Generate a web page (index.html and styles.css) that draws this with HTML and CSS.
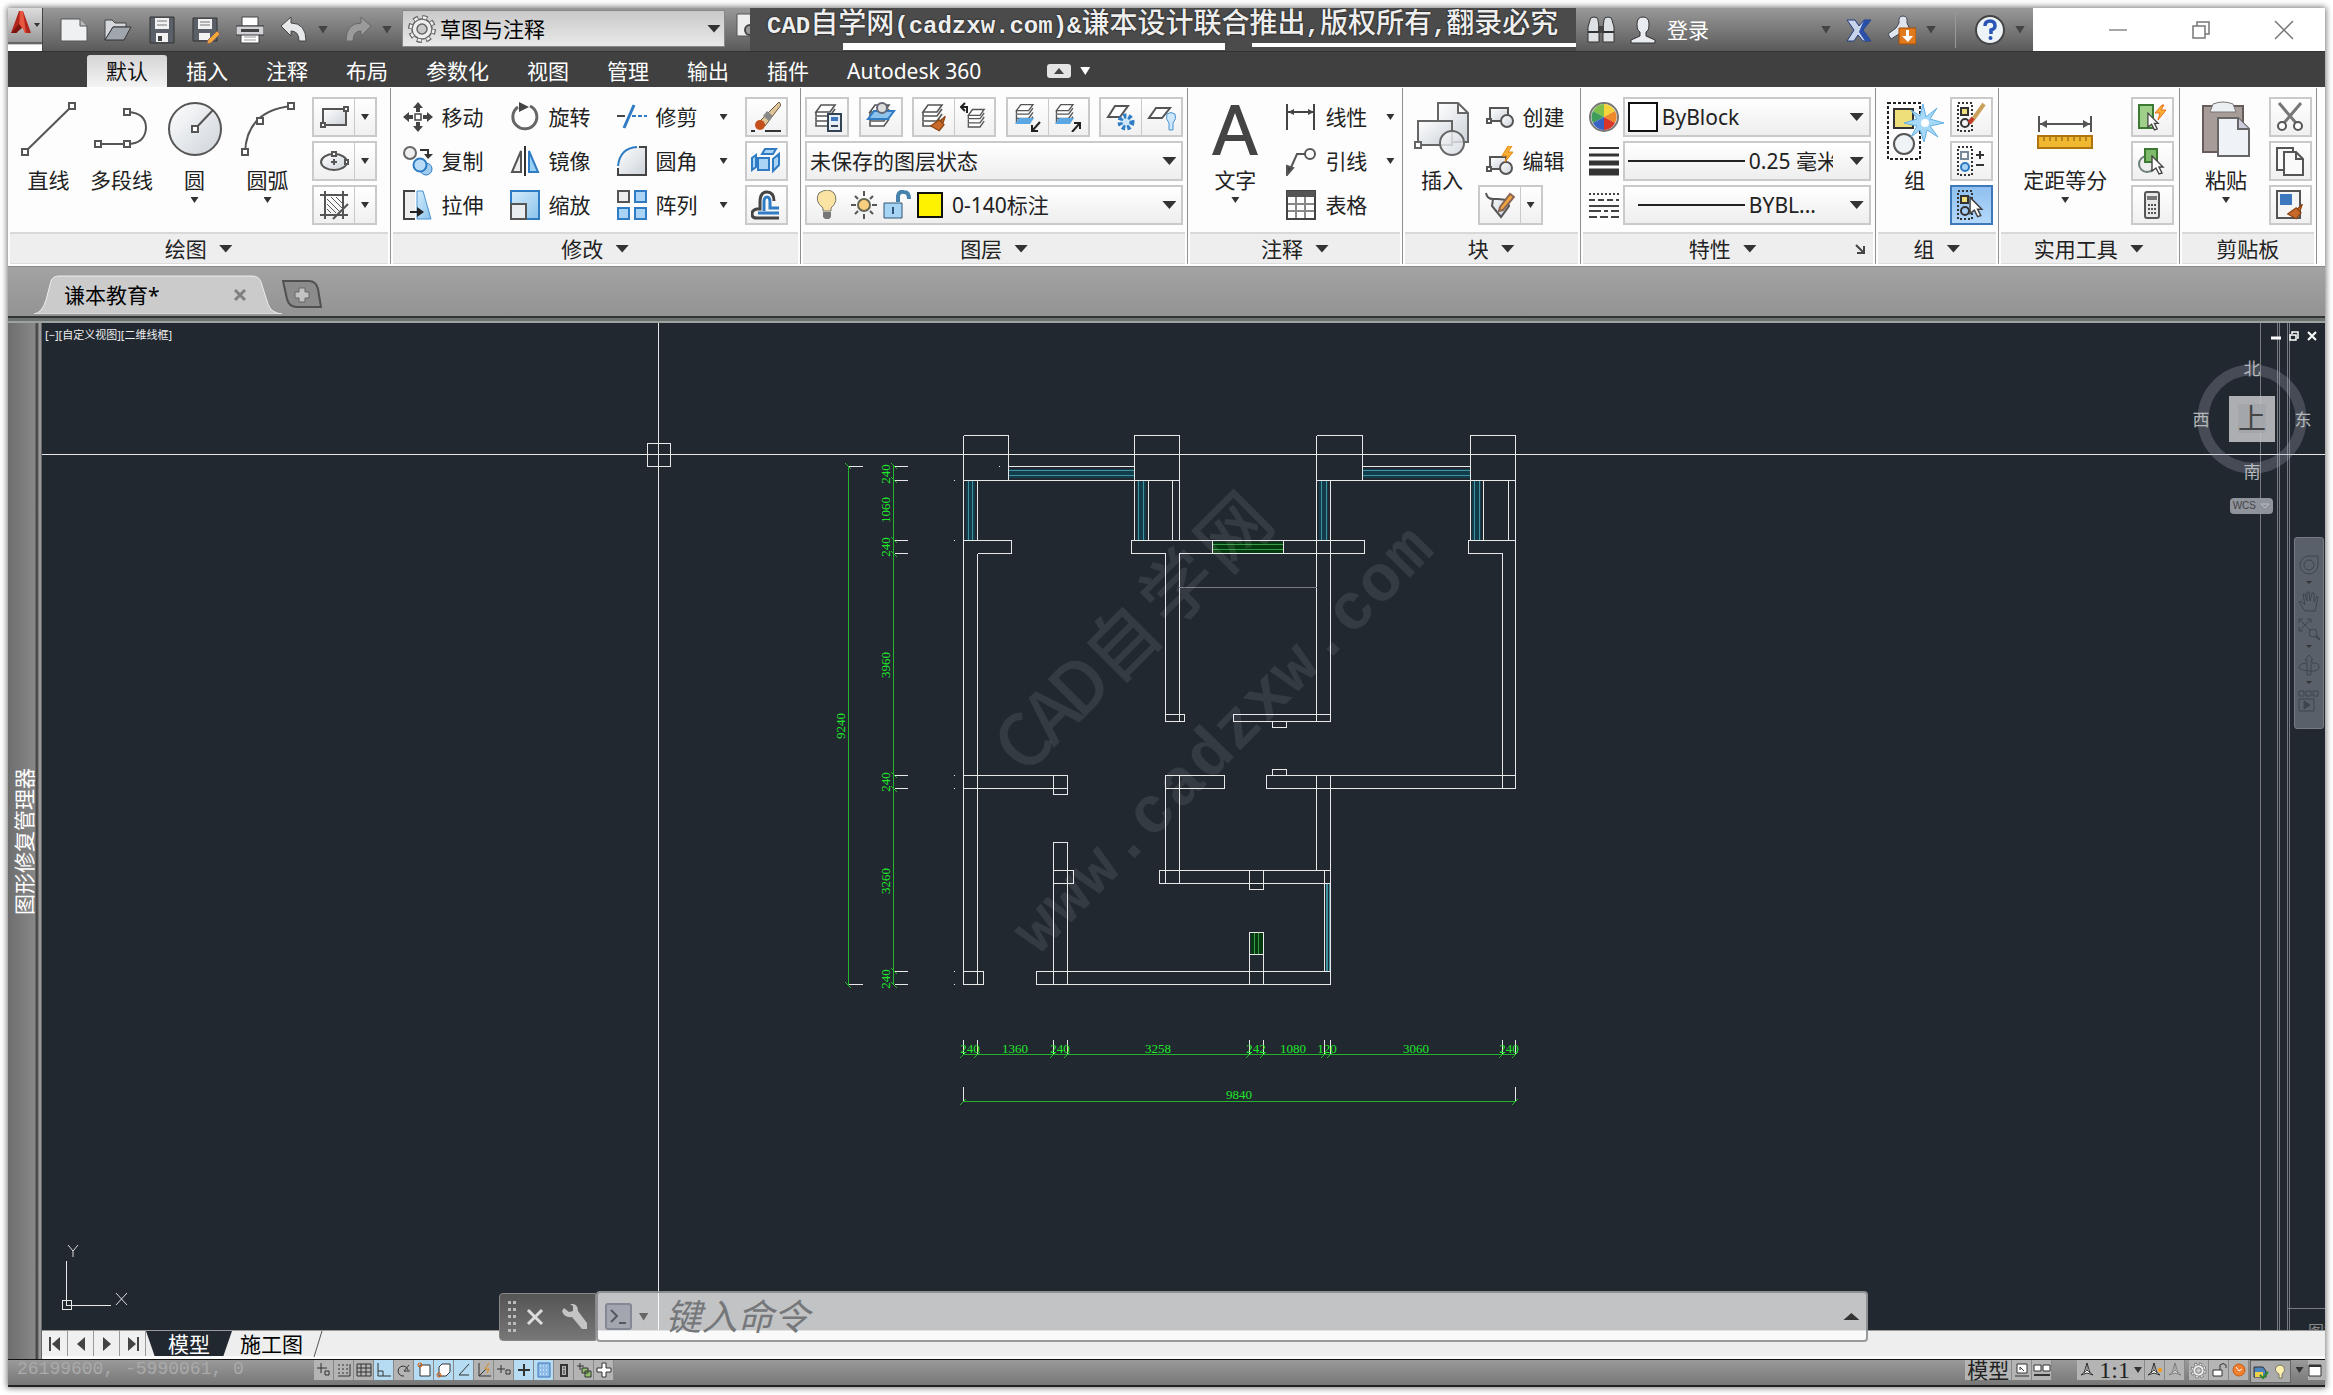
FILE: index.html
```html
<!DOCTYPE html>
<html lang="zh-CN">
<head>
	<meta charset="UTF-8">
	<meta name="viewport" content="width=device-width">
	<title>谦本教育</title>
	<link rel="stylesheet" href="styles.css">
</head>
<body>
	<!-- shared icon parts -->
	<svg class="defs" aria-hidden="true">
		<linearGradient id="gMetal" x1="0" y1="0" x2="1" y2="1"><stop offset="0" stop-color="#fff"/><stop offset="1" stop-color="#cdd3da"/></linearGradient>
		<linearGradient id="gBlue" x1="0" y1="0" x2="1" y2="1"><stop offset="0" stop-color="#d3ecfb"/><stop offset="1" stop-color="#8cc3ec"/></linearGradient>
		<symbol id="layers" viewBox="0 0 30 30">
			<path d="M9 3h14l-5 7H4zM4 10l0 4h14l5-7M4 15v4h14l5-7M4 20v4h14l5-7" fill="#fff" stroke="#555" stroke-width="1.6"/>
		</symbol>
		<symbol id="cursor" viewBox="0 0 14 20">
			<path d="M1 1l11 11H8l3 6-3 1-3-6-4 3z" fill="#fff" stroke="#444" stroke-width="1.4"/>
		</symbol>
		<symbol id="brush" viewBox="0 0 14 14">
			<path d="M13 1L9 5l2 2zM8 4l4 4-4 5-7-4z" fill="#c8692a" stroke="#8a4312"/>
		</symbol>
		<symbol id="gear" viewBox="0 0 30 30">
			<circle cx="15" cy="15" r="11.500" fill="none" stroke="#666" stroke-width="5" stroke-dasharray="5 4.030"/>
			<circle cx="15" cy="15" r="10" fill="#eee" stroke="#666" stroke-width="1.500"/>
			<circle cx="15" cy="15" r="11.500" fill="none" stroke="#eee" stroke-width="2.500" stroke-dasharray="3.500 5.530" stroke-dashoffset="-.7"/>
			<circle cx="15" cy="15" r="5" fill="#c9c9c9" stroke="#666" stroke-width="1.500"/>
		</symbol>
	</svg>

	<div class="app">
		<header class="titlebar">
			<button class="logo" aria-label="应用程序菜单">
				<svg width="34" height="35"><path d="M11 3h4l8 22h-6l-2-5h-5l-1 5H3z" fill="#b3261e"/><path d="M12 3h3l3 22h-1l-2-5h-4z" fill="#e8563d"/><path d="M3 25l8-9 3 4-6 5z" fill="#7d1410"/><path d="M26 15h6l-3 4z" fill="#333"/></svg>
			</button>
			<div class="quick">
				<button aria-label="新建"><svg width="28" height="28"><path d="M1 3h19l7 7v15H1z" fill="#eef0f2" stroke="#555"/><path d="M20 3v7h7" fill="#bbb" stroke="#555"/></svg></button>
				<button aria-label="打开"><svg width="28" height="28"><path d="M1 24V4h7l3 3h11v4H9z" fill="#d5d8dc" stroke="#444"/><path d="M1 24L9 11h18l-7 13z" fill="#9fa6ae" stroke="#333"/></svg></button>
				<button aria-label="保存"><svg width="28" height="28"><path d="M2 1h24v26H2z" fill="#5b6068" stroke="#333"/><path d="M7 2h14v11H7zM8 17h12v9H8z" fill="#f2f2f2"/><path d="M9 5h10M9 9h10" stroke="#777"/><path d="M10 20h4v5h-4z" fill="#444"/></svg></button>
				<button aria-label="另存为"><svg width="28" height="28"><path d="M1 2h24v23H1z" fill="#5b6068" stroke="#333"/><path d="M6 3h14v10H6zM7 17h11v7H7z" fill="#f2f2f2"/><path d="M8 6h10M8 9h10" stroke="#777"/><path d="M16 24l9-9 3 3-9 9-4 1z" fill="#f3a63b" stroke="#865"/></svg></button>
				<button aria-label="打印"><svg width="28" height="28"><path d="M6 1h16v9H6zM5 17h18v10H5z" fill="#fff" stroke="#444"/><path d="M0 10h28v9H0z" fill="#d0d2d5" stroke="#333"/><path d="M5 13h18v3H5z" fill="#444"/><path d="M8 21h12M8 24h12" stroke="#999"/></svg></button>
				<button aria-label="放弃"><svg width="28" height="28"><path d="M1 10L11 1v6q15 0 15 18h-7q0-10-8-10v5z" fill="#e6e8ea" stroke="#444"/></svg><i class="tri dim"></i></button>
				<button aria-label="重做"><svg width="28" height="28"><path d="M27 10L17 1v6Q2 7 2 25h7q0-10 8-10v5z" fill="#9b9b9b" stroke="#666"/></svg><i class="tri dim"></i></button>
			</div>
			<label class="workspace">
				<svg width="30" height="30"><use href="#gear"/></svg>
				<select aria-label="工作空间"><option>草图与注释</option></select>
				<i class="tri large"></i>
			</label>
			<svg class="docfind" width="25" height="36"><path d="M12 6h20v22H12z" fill="#eee" stroke="#555"/><circle cx="25" cy="22" r="5" fill="#999" stroke="#444" stroke-width="2"/></svg>
			<div class="banner">
				<p>CAD<b>自学网</b>(cadzxw.com)&amp;<b>谦本设计联合推出</b>,<b>版权所有</b>,<b>翻录必究</b></p>
				<div class="strips"><i></i><i></i></div>
			</div>
			<div class="account">
				<button aria-label="搜索"><svg width="28" height="28"><path d="M3 4q0-3 4-3t4 3l1 7v15H1V11zM17 4q0-3 4-3t4 3l2 7v15H16V11z" fill="#dfe2e5" stroke="#333"/><path d="M11 10h6v7h-6z" fill="#444"/><path d="M1 16h11M16 16h11" stroke="#333" stroke-width="2"/></svg></button>
				<button class="login"><svg width="28" height="28"><path d="M8 8q0-7 6-7t6 7-3 8v4l9 4v3H2v-3l9-4v-4q-3-1-3-8z" fill="#e9edf1" stroke="#333"/></svg>登录<i class="tri dim"></i></button>
				<button aria-label="Exchange"><svg width="28" height="28"><path d="M2 4h8l4 6 5-6h7l-8 10 8 11h-8l-5-6-4 6H2l7-11z" fill="#c8d4ea" stroke="#223a7a"/><path d="M19 4h7l-8 10 8 11h-6l-6-9z" fill="#2a4fa8"/></svg></button>
				<button aria-label="A360"><svg width="29" height="30"><path d="M12 8q-1-7 4-7t4 7l6 13-8 6-6-8-8 5-3-5 8-6z" fill="#dfe5ee" stroke="#445"/><path d="M12 13h17v16H12z" fill="#e07a1c" stroke="#a34c06"/><path d="M19 15h3v6h4l-5 6-6-6h4z" fill="#fff"/></svg><i class="tri dim"></i></button>
				<i class="sep"></i>
				<button aria-label="帮助"><svg width="30" height="30"><circle cx="15" cy="15" r="14" fill="#eef3f8" stroke="#444" stroke-width="2"/><path d="M10 11q0-5 5-5t5 5q0 3-4 4v4" fill="none" stroke="#2a55b5" stroke-width="3.500"/><circle cx="15.500" cy="23" r="2" fill="#2a55b5"/></svg><i class="tri dim"></i></button>
			</div>
			<div class="winctl">
				<button aria-label="最小化"><svg width="20" height="20"><path d="M1 10h18" stroke="#888" stroke-width="1.500"/></svg></button>
				<button aria-label="还原"><svg width="20" height="20" fill="none" stroke="#777" stroke-width="1.500"><path d="M2 6h12v12H2zM6 6V2h12v12h-4"/></svg></button>
				<button aria-label="关闭"><svg width="20" height="20"><path d="M1 1l18 18M19 1L1 19" stroke="#777" stroke-width="1.500"/></svg></button>
			</div>
		</header>

		<nav class="tabs">
			<button class="active">默认</button>
			<button>插入</button>
			<button>注释</button>
			<button>布局</button>
			<button>参数化</button>
			<button>视图</button>
			<button>管理</button>
			<button>输出</button>
			<button>插件</button>
			<button>Autodesk 360</button>
			<button class="mini" aria-label="最小化功能区"><svg width="24" height="14"><rect width="24" height="14" rx="3" fill="#e4e4e4"/><path d="M7 10h10l-5-6z" fill="#444"/></svg><i class="tri white"></i></button>
		</nav>

		<div class="ribbon">
			<section class="panel draw">
				<div class="body">
					<button class="big"><svg width="56" height="56" fill="#fff" stroke="#555" stroke-width="2"><path d="M4 51L51 5"/><path d="M1 48h6v6H1zM48 2h6v6h-6z"/></svg>直线</button>
					<button class="big"><svg width="56" height="56" fill="none" stroke="#555" stroke-width="2"><path d="M4 43h29q18 0 19-16 0-15-18-16"/><path fill="#fff" d="M1 40h6v6H1zM30 40h6v6h-6zM30 8h6v6h-6z"/></svg>多段线</button>
					<button class="big"><svg width="56" height="56" stroke="#555" stroke-width="2"><circle cx="28" cy="28" r="26" fill="url(#gMetal)"/><path d="M28 28l18-19"/><path fill="#fff" d="M25 25h6v6h-6z"/></svg>圆<i class="tri small"></i></button>
					<button class="big"><svg width="56" height="56" fill="none" stroke="#555" stroke-width="2"><path d="M5 51Q7 10 51 5"/><path fill="#fff" d="M2 48h6v6H2zM17 17h6v6h-6zM48 2h6v6h-6z"/></svg>圆弧<i class="tri small"></i></button>
					<div class="stack">
						<div class="split"><button aria-label="矩形"><svg width="30" height="24" fill="#fff" stroke="#555" stroke-width="2"><path fill="url(#gMetal)" d="M4 4h23v16H4z"/><path d="M2 18h4v4H2zM25 2h4v4h-4z"/></svg></button><button aria-label="更多"><i class="tri small"></i></button></div>
						<div class="split"><button aria-label="椭圆"><svg width="30" height="24" fill="#fff" stroke="#555" stroke-width="2"><ellipse cx="15" cy="13" rx="13" ry="8" fill="url(#gMetal)"/><path d="M13 3h4v4h-4zM26 11h3v4h-3zM15 10v6M12 13h6"/></svg></button><button aria-label="更多"><i class="tri small"></i></button></div>
						<div class="split"><button aria-label="图案填充"><svg width="30" height="30" fill="none" stroke="#555" stroke-width="2"><path d="M6 1v28M24 1v28M1 5h28M1 25h28M29 14L14 29"/><path stroke-width="1" d="M8 9l13 13M8 14l9 9M12 7l11 11M17 7l6 6M8 19l4 4"/></svg></button><button aria-label="更多"><i class="tri small"></i></button></div>
					</div>
				</div>
				<button class="caption">绘图<i class="tri large"></i></button>
			</section>

			<section class="panel modify">
				<div class="body">
					<div class="stack">
						<button class="item"><svg width="30" height="30" fill="#444"><path d="M15 0l5 6h-3v4h-4V6h-3zM15 30l5-6h-3v-4h-4v4h-3zM0 15l6-5v3h4v4H6v3zM30 15l-6-5v3h-4v4h4v3z"/><path d="M12 12h6v6h-6z" fill="#fff" stroke="#444" stroke-width="1.500"/></svg>移动</button>
						<button class="item"><svg width="30" height="30"><circle cx="7" cy="7" r="6" fill="#eee" stroke="#666" stroke-width="2"/><path d="M17 4h8v5" fill="none" stroke="#333" stroke-width="2"/><path d="M21 8h9l-5 5z" fill="#333"/><circle cx="23" cy="23" r="6" fill="#9ecbf0" stroke="#2f7bc4"/><circle cx="17" cy="19" r="6.500" fill="#b8dcf6" stroke="#2f7bc4" stroke-width="2"/></svg>复制</button>
						<button class="item"><svg width="30" height="30"><path d="M12 1H1v28h11" fill="#eee" stroke="#444" stroke-width="2"/><path d="M14 1h6l8 28H14z" fill="url(#gBlue)" stroke="#4b94d4"/><path d="M7 22h12" stroke="#222" stroke-width="2"/><path d="M14 17l7 5-7 5z" fill="#222"/></svg>拉伸</button>
					</div>
					<div class="stack">
						<button class="item"><svg width="30" height="30"><path d="M20 4a12 12 0 1 1-12 1" fill="none" stroke="#666" stroke-width="3"/><path d="M9 0l10 5-10 5z" fill="#444"/></svg>旋转</button>
						<button class="item"><svg width="30" height="30"><path d="M11 5v21H2z" fill="#eee" stroke="#555" stroke-width="2"/><path d="M19 5v21h9z" fill="#9bd0f5" stroke="#2f7bc4" stroke-width="2"/><path d="M15 0v30" stroke="#333" stroke-width="2"/></svg>镜像</button>
						<button class="item"><svg width="30" height="30"><path d="M1 1h28v28H1z" fill="url(#gBlue)" stroke="#2f7bc4" stroke-width="2"/><path d="M1 14h15v15H1z" fill="#e9edf0" stroke="#555" stroke-width="2"/></svg>缩放</button>
					</div>
					<div class="stack wide">
						<button class="item"><svg width="30" height="30" fill="none" stroke-width="2"><path d="M0 14h8" stroke="#444"/><path d="M7 26L17 3" stroke="#2f7bc4" stroke-width="3"/><path d="M15 14h15" stroke="#2f7bc4" stroke-dasharray="4 2"/></svg>修剪<i class="tri small"></i></button>
						<button class="item"><svg width="30" height="30" fill="none" stroke-width="2"><path d="M1 20Q3 2 20 1h9v28H1z" fill="url(#gMetal)" stroke="none"/><path d="M1 20Q3 2 20 1" stroke="#2f7bc4"/><path d="M22 1h7v28H1v-7" stroke="#444"/></svg>圆角<i class="tri small"></i></button>
						<button class="item"><svg width="30" height="30" fill="#a9d4f5" stroke="#2f7bc4" stroke-width="2"><path d="M1 1h11v11H1z" fill="#eee" stroke="#555"/><path d="M18 1h11v11H18zM1 18h11v11H1zM18 18h11v11H18z"/></svg>阵列<i class="tri small"></i></button>
					</div>
					<div class="stack">
						<button class="tool" aria-label="删除"><svg width="30" height="30"><path d="M0 29h4M14 29h16" stroke="#333" stroke-width="2"/><path d="M28 0l2 3-16 21-6-4z" fill="#dfc59a" stroke="#6b5840"/><path d="M16 9l6 5-4 5-6-5z" fill="#888"/><circle cx="9" cy="23" r="5" fill="#c5501c"/></svg></button>
						<button class="tool" aria-label="分解"><svg width="30" height="30" fill="#a9d4f5" stroke="#2f7bc4" stroke-width="2"><path d="M11 8l3-5h11l-3 5zM7 12h11v12H7zM1 12l4-3v12l-4 3zM22 13l6-5v11l-6 6z"/></svg></button>
						<button class="tool" aria-label="偏移"><svg width="30" height="30" fill="none" stroke="#444" stroke-width="3"><path d="M28 28H6q-5 0-5-4t5-5h3v-7q0-10 7-10t7 9"/><path d="M28 23H7M13 21v-9q0-5 3-5t3 5v6h9" stroke="#2f7bc4"/></svg></button>
					</div>
				</div>
				<button class="caption">修改<i class="tri large"></i></button>
			</section>

			<section class="panel layer">
				<div class="body stack">
					<div class="row">
						<div class="split even"><button aria-label="图层特性"><svg width="30" height="30"><use href="#layers"/><path d="M16 12h13v17H16z" fill="#e8eef6" stroke="#345" stroke-width="2"/><path d="M19 15h7v4h-7z" fill="#3b78bd"/><path d="M19 24h7" stroke="#345" stroke-width="2"/></svg></button></div>
						<div class="split even"><button aria-label="图层隔离"><svg width="30" height="30"><use href="#layers"/><path d="M8 9h20l-6 8H2z" fill="#8cc3ec" stroke="#2f7bc4" stroke-width="2"/><circle cx="16" cy="6" r="5" fill="#ddd" stroke="#667" stroke-width="2"/></svg></button></div>
						<div class="split even"><button aria-label="匹配图层"><svg width="30" height="30"><use href="#layers"/><use href="#brush" x="10" y="13" width="18" height="17"/></svg></button><button aria-label="上一个图层"><svg width="30" height="30"><use href="#layers" x="5" y="5" width="25" height="25"/><path d="M1 5h6v6M5 1L1 5l4 4" fill="none" stroke="#222" stroke-width="2"/></svg></button></div>
						<div class="split even"><button aria-label="置为当前"><svg width="30" height="30"><use href="#layers" width="26" height="26"/><path d="M6 16h15l-4 6H2z" fill="#5aa7e4"/><path d="M27 20l-8 9m0-6v6h6" fill="none" stroke="#222" stroke-width="2"/></svg></button><button aria-label="更改图层"><svg width="30" height="30"><use href="#layers" width="26" height="26"/><path d="M6 16h15l-4 6H2z" fill="#5aa7e4"/><path d="M19 30l8-9m-6 0h6v6" fill="none" stroke="#222" stroke-width="2"/></svg></button></div>
						<div class="split even"><button aria-label="冻结图层"><svg width="30" height="30"><path d="M9 4h13l-8 11H2z" fill="#fff" stroke="#555" stroke-width="2"/><circle cx="20" cy="20" r="6" fill="#cfe7fa" stroke="#2f7bc4" stroke-width="5" stroke-dasharray="3 2"/></svg></button><button aria-label="关闭图层"><svg width="30" height="30"><path d="M9 6h14l-8 10H2z" fill="#fff" stroke="#555" stroke-width="2"/><path d="M20 12q4-3 8 0 2 5-2 9v7h-4v-7q-4-4-2-9z" fill="#cfe7fa" stroke="#4b94d4"/></svg></button></div>
					</div>
					<label class="combo"><select aria-label="图层状态"><option>未保存的图层状态</option></select><i class="tri large"></i></label>
					<label class="combo">
						<svg width="104" height="30"><path d="M6 3q9-6 15 0 5 8-3 15v3h-8v-3Q1 11 6 3z" fill="#fbe3a4" stroke="#776"/><path d="M10 22h8v5l-2 2h-4l-2-2z" fill="#777"/><circle cx="51" cy="15" r="6" fill="#f8cf7e" stroke="#665" stroke-width="2"/><path d="M51 1v5M51 24v5M38 15h5M59 15h5M42 6l3 3M57 21l3 3M60 6l-3 3M45 21l-3 3" stroke="#555" stroke-width="2"/><path d="M71 13h18v15H71z" fill="#a5d4f4" stroke="#357"/><path d="M85 12V6q1-5 6-4 5 0 5 7" fill="none" stroke="#4682ac" stroke-width="4"/><path d="M80 17v7" stroke="#357" stroke-width="2"/></svg>
						<i class="swatch yellow"></i>
						<select aria-label="图层"><option>0-140标注</option></select><i class="tri large"></i>
					</label>
				</div>
				<button class="caption">图层<i class="tri large"></i></button>
			</section>

			<section class="panel note">
				<div class="body">
					<button class="big"><svg width="56" height="56"><path d="M5 54L24 4h8l19 50h-8l-5-14H18l-5 14zM20 34h16l-8-22z" fill="#444" fill-rule="evenodd"/></svg>文字<i class="tri small"></i></button>
					<div class="stack">
						<button class="item"><svg width="30" height="30" stroke="#444" stroke-width="2"><path d="M1 2v26M28 2v26M2 10h26"/><path d="M2 10l6-3v6zM28 10l-6-3v6z" fill="#444" stroke="none"/></svg>线性<i class="tri small"></i></button>
						<button class="item"><svg width="30" height="30" fill="none" stroke="#555" stroke-width="2"><circle cx="24" cy="8" r="5"/><path d="M19 8h-8L3 26"/><path d="M1 20l6 2-6 7z" fill="#444"/></svg>引线<i class="tri small"></i></button>
						<button class="item"><svg width="30" height="30"><path d="M1 1h28v28H1z" fill="#fff" stroke="#444" stroke-width="2"/><path d="M1 1h28v6H1z" fill="#555"/><path d="M2 14h26M2 21h26M10 7v21M19 7v21" stroke="#888" stroke-width="2"/></svg>表格</button>
					</div>
				</div>
				<button class="caption">注释<i class="tri large"></i></button>
			</section>

			<section class="panel block">
				<div class="body">
					<button class="big"><svg width="56" height="56" fill="url(#gMetal)" stroke="#666" stroke-width="2"><path d="M24 2h20l10 10v29H24zM44 2v10h10"/><path d="M4 20h34v24H4z"/><path d="M1 41h6v6H1z" fill="#fff"/><circle cx="38" cy="42" r="12" fill-opacity=".8"/></svg>插入</button>
					<div class="stack">
						<button class="item"><svg width="28" height="30" fill="url(#gMetal)" stroke="#555" stroke-width="2"><path d="M4 6h18v13H4z"/><path d="M1 17h4v4H1z" fill="#fff"/><circle cx="21" cy="19" r="6"/></svg>创建</button>
						<button class="item"><svg width="28" height="30" fill="url(#gMetal)" stroke="#555" stroke-width="2"><path d="M4 11h16v12H4z"/><path d="M1 21h4v4H1z" fill="#fff"/><circle cx="20" cy="22" r="6"/><path d="M22 0l-6 10h5l-2 6 8-10h-5l4-6z" fill="#f7b031" stroke="#e0871a" stroke-width="1"/></svg>编辑</button>
						<div class="split"><button aria-label="编辑属性"><svg width="30" height="30" fill="none" stroke="#555" stroke-width="2"><path d="M1 3q1 6 7 6h5l9 1 2 6-8 11-9-11 1-7" fill="url(#gMetal)"/><path d="M15 17L25 4l4 3-11 13-4 1z" fill="#f3a63b" stroke="#865"/></svg></button><button aria-label="更多"><i class="tri small"></i></button></div>
					</div>
				</div>
				<button class="caption">块<i class="tri large"></i></button>
			</section>

			<section class="panel props">
				<div class="body stack">
					<div class="prop"><svg width="30" height="30"><circle cx="15" cy="15" r="14" fill="#eee" stroke="#777" stroke-width="2"/><path d="M15 15V2A13 13 0 0 1 26 9z" fill="#f5d33b"/><path d="M15 15V2A13 13 0 0 0 4 9z" fill="#7fc04c"/><path d="M15 15L26 9a13 13 0 0 1 0 12z" fill="#ee8a2b"/><path d="M15 15L4 9a13 13 0 0 0 0 12z" fill="#3f9c59"/><path d="M15 15l11 6a13 13 0 0 1-11 7z" fill="#d9362b"/><path d="M15 15L4 21a13 13 0 0 0 11 7z" fill="#3762c4"/></svg>
						<label class="combo"><i class="swatch"></i><select aria-label="对象颜色"><option>ByBlock</option></select><i class="tri large"></i></label></div>
					<div class="prop"><svg width="30" height="30" stroke="#333"><path d="M0 2h30" stroke-width="2"/><path d="M0 9h30" stroke-width="3"/><path d="M0 17h30" stroke-width="5"/><path d="M0 26h30" stroke-width="7"/></svg>
						<label class="combo"><i class="line"></i><select class="cut" aria-label="线宽"><option>0.25 毫米</option></select><i class="tri large"></i></label></div>
					<div class="prop"><svg width="30" height="30" stroke="#444" stroke-width="2"><path d="M0 4h30" stroke-dasharray="2 2"/><path d="M0 10h30" stroke-dasharray="6 3"/><path d="M0 16h30"/><path d="M0 21h30" stroke-dasharray="12 3 4 3"/><path d="M0 27h30" stroke-dasharray="8 3"/></svg>
						<label class="combo"><i class="line short"></i><select class="cut" aria-label="线型"><option>BYBL...</option></select><i class="tri large"></i></label></div>
				</div>
				<div class="caption"><span></span><button>特性<i class="tri large"></i></button><button class="launch" aria-label="特性选项板"><svg width="10" height="10"><path d="M1 1l7 7M9 2v7H2" fill="none" stroke="#444" stroke-width="2"/></svg></button></div>
			</section>

			<section class="panel group">
				<div class="body">
					<button class="big"><svg width="60" height="60"><path d="M3 2h32v56H3z" fill="none" stroke="#222" stroke-width="2" stroke-dasharray="3 2"/><path d="M9 8h19v19H9z" fill="#efdf7a" stroke="#333" stroke-width="2"/><circle cx="19" cy="43" r="10" fill="#eef3f7" stroke="#555" stroke-width="2"/><path d="M38 3l3 13 11-9-7 11 14 4-14 3 8 11-11-7-3 12-4-12-9 7 6-11-13-3 13-4-6-9 9 6z" fill="#a6d9f8" stroke="#63b0e4"/><circle cx="40" cy="22" r="4" fill="#fff"/></svg>组</button>
					<div class="stack">
						<button class="tool" aria-label="解除编组"><svg width="30" height="30" fill="none" stroke="#333" stroke-width="2"><path d="M2 1h14v28H2z" stroke-dasharray="2 2"/><path d="M5 6h7v7H5z" fill="#efdf7a"/><circle cx="9" cy="21" r="4"/><path d="M28 2L18 16l-4 5" stroke="#caa05a" stroke-width="4"/><path d="M17 16l-4 5" stroke="#c0392b" stroke-width="4"/></svg></button>
						<button class="tool" aria-label="组编辑"><svg width="30" height="30" fill="none" stroke="#333" stroke-width="2"><path d="M2 1h14v28H2z" stroke-dasharray="2 2"/><path d="M5 6h7v7H5z" stroke="#789"/><circle cx="9" cy="21" r="4" fill="#a9d4f5" stroke="#2f7bc4"/><path d="M20 9h8M24 5v8M20 19h8"/></svg></button>
						<button class="tool on" aria-label="启用组选择"><svg width="30" height="30" fill="none" stroke="#333" stroke-width="2"><path d="M2 1h14v28H2z" stroke-dasharray="2 2"/><path d="M5 6h7v7H5z" fill="#efdf7a"/><circle cx="9" cy="21" r="4"/><use href="#cursor" x="13" y="6" width="15" height="22"/></svg></button>
					</div>
				</div>
				<button class="caption">组<i class="tri large"></i></button>
			</section>

			<section class="panel utils">
				<div class="body">
					<button class="big"><svg width="56" height="56"><path d="M2 15v16M54 15v16M3 23h50" stroke="#555" stroke-width="2"/><path d="M3 23l7-4v8zM53 23l-7-4v8z" fill="#555"/><path d="M1 35h54v12H1z" fill="#f0b731" stroke="#ad7410" stroke-width="2"/><path d="M7 36v4M13 36v4M19 36v4M25 36v4M31 36v4M37 36v4M43 36v4M49 36v4" stroke="#7b5410"/></svg>定距等分<i class="tri small"></i></button>
					<div class="stack">
						<button class="tool" aria-label="快速选择"><svg width="30" height="30"><path d="M2 3h14v23H2z" fill="#9ed08a" stroke="#3c7a34" stroke-width="2"/><path d="M25 3l-7 8h5l-2 7 8-10h-5l3-5z" fill="#f7b031" stroke="#ea6f1b"/><use href="#cursor" x="10" y="10" width="13" height="19"/></svg></button>
						<button class="tool" aria-label="全部选择"><svg width="30" height="30"><circle cx="10" cy="18" r="8" fill="#eee" stroke="#6a8078" stroke-width="2"/><path d="M8 3h12v13H8z" fill="#7dbb6a" stroke="#3c7a34" stroke-width="2"/><use href="#cursor" x="14" y="9" width="14" height="20"/></svg></button>
						<button class="tool" aria-label="快速计算器"><svg width="30" height="30"><rect x="8" y="2" width="14" height="26" rx="2" fill="#e8e8e8" stroke="#555" stroke-width="2"/><path d="M10 6h10v4H10z" fill="#777"/><path d="M11 15h9M11 19h9M11 23h9" stroke="#555" stroke-width="2" stroke-dasharray="2 1"/></svg></button>
					</div>
				</div>
				<button class="caption">实用工具<i class="tri large"></i></button>
			</section>

			<section class="panel clip">
				<div class="body">
					<button class="big"><svg width="56" height="56"><path d="M5 5h40v46H5z" fill="#a79c98" stroke="#665c59" stroke-width="2"/><path d="M15 3q10-4 20 0l3 8H12z" fill="#eceff1" stroke="#777"/><path d="M20 17h20l11 11v27H20z" fill="#eff2f6" stroke="#666" stroke-width="2"/><path d="M40 17v11h11" fill="#ccd" stroke="#666" stroke-width="2"/></svg>粘贴<i class="tri small"></i></button>
					<div class="stack">
						<button class="tool" aria-label="剪切"><svg width="30" height="30"><path d="M4 1l17 20M26 1L9 21" stroke="#777" stroke-width="3"/><circle cx="7" cy="24" r="4" fill="#fff" stroke="#555" stroke-width="2"/><circle cx="23" cy="24" r="4" fill="#fff" stroke="#555" stroke-width="2"/></svg></button>
						<button class="tool" aria-label="复制"><svg width="30" height="30" fill="#fafafa" stroke="#555" stroke-width="2"><path d="M2 2h16v22H2z"/><path d="M9 6h12l7 7v16H9zM21 6v7h7"/></svg></button>
						<button class="tool" aria-label="特性匹配"><svg width="30" height="30"><path d="M2 1h23v27H2z" fill="#f5f5f5" stroke="#555" stroke-width="2"/><path d="M5 4h12v11H5z" fill="#3b78bd"/><use href="#brush" x="11" y="13" width="18" height="17"/></svg></button>
					</div>
				</div>
				<div class="caption">剪贴板</div>
			</section>
		</div>

		<div class="docs">
			<div class="doctab">
				<svg class="shape" viewBox="0 0 248 39" preserveAspectRatio="none"><path d="M0 39Q8 38 12 25L17 6Q19 1 25 1h193q7 0 9 6l7 22q3 9 14 10z" fill="#cbcbcb" stroke="#ededed"/></svg>
				<span>谦本教育*</span>
				<button aria-label="关闭"><svg width="14" height="14"><path d="M2 2l10 10M12 2L2 12" stroke="#808080" stroke-width="3"/></svg></button>
			</div>
			<button class="adddoc" aria-label="新图形"><svg width="40" height="28"><path d="M1 1h26q7 0 9 8l3 18H15q-8 0-10-8z" fill="#8b8b8b" stroke="#505050" stroke-width="2"/><path d="M17 8h6v4h4v6h-4v4h-6v-4h-4v-6h4z" fill="#c2c2c2" stroke="#666"/></svg></button>
		</div>

		<main class="work">
			<aside class="side"><span>图形修复管理器</span></aside>
			<div class="view">
				<div class="canvas">
					<svg class="drawing" viewBox="42 323 2283 1007" preserveAspectRatio="xMidYMin slice">
						<!-- windows -->
						<path class="glass" d="M1009 473.500h125M1363 473.500h107M970.500 481v59M1141.500 481v59M1323.500 481v59M1476.500 481v59"/>
						<path class="glassline" d="M1009 470.500h125M1009 475.500h125M1363 470.500h107M1363 475.500h107M968.500 481v59M972.500 481v59M1138.500 481v59M1143.500 481v59M1321.500 481v59M1326.500 481v59M1474.500 481v59M1479.500 481v59M1326.500 884v87M1327.500 884v87M1329.500 884v87"/>
						<path class="door" d="M1213 547.500h70M1256.500 933v21"/>
						<path class="doorline" d="M1213 544.500h70M1213 549.500h70M1254.500 933v21M1258.500 933v21"/>
						<!-- walls -->
						<g class="wall">
							<path d="M963.500 435.500h45v45M963.500 435.500v549M963.500 480.500h215M1134.500 540.500v-105h44.500v105M1316.500 435.500h46v45M1316.500 435.500v286M1316.500 480.500h199M1470.500 540.500v-105h45v353"/>
							<path d="M1008.500 466.500h126M1362.500 466.500h108M977.500 480.500v60M977.500 553.500v431M1148.500 480.500v60M1172.500 480.500v60M1483.500 480.500v60M1508.500 480.500v60M1330.500 480.500v241"/>
							<path d="M963.500 540.500h48v13h-34M1165.500 721.500v-168h-34v-13h233v13h-185v168M1515.500 540.500h-47v13h34v235M1212.500 540.500v13M1283.500 540.500v13"/>
							<path d="M1165.500 714.500h19v7h-19M1330.500 721.500h-97v-7h97M1272.500 721.500v6h14v-6M1272.500 775.500v-6h14v6"/>
							<path d="M963.500 775.500h104v19h-14v-19M963.500 788.500h104M1224.500 775.500v13h-59M1165.500 883.500v-108h59M1179.500 775.500v108M1515.500 775.500h-249v13h249M1316.500 775.500v95M1330.500 775.500v209"/>
							<path d="M1053.500 984.500v-142h14v142M1053.500 870.500h20v13h-20M1330.500 870.500h-171v13h171M1249.500 870.500v19h14v-19M1324.500 870.500v101"/>
							<path d="M1249.500 984.500v-52h14v52M1249.500 954.500h14M963.500 971.500h20v13h-20M1330.500 971.500h-294v13h294"/>
						</g>
						<path class="wall faint" d="M1179 587.500h138M2260.500 323v1007M2277.500 323v1007M2279.500 323v1007M2287.500 323v1007M2289.500 323v1007M2288 1308.500h37"/>
						<!-- dimensions -->
						<g class="dim">
							<path d="M848.500 466v519M893.500 466v519M963 1054.500h553M963 1101.500h553"/>
							<path d="M845 463l6 6M845 982l6 6M891 463l6 6M891 477l6 6M891 537l6 6M891 551l6 6M891 772l6 6M891 786l6 6M891 968l6 6M891 982l6 6M960 1058l6-6M974 1058l6-6M1050 1058l6-6M1064 1058l6-6M1246 1058l6-6M1260 1058l6-6M1321 1058l6-6M1327 1058l6-6M1499 1058l6-6M1512 1058l6-6M960 1105l6-6M1512 1105l6-6"/>
						</g>
						<path class="wall" d="M849 466.500h14M849 984.500h14M895 466.500h13M895 480.500h13M895 540.500h13M895 553.500h13M895 775.500h13M895 788.500h13M895 971.500h13M895 984.500h13M963.500 1040v14M977.500 1040v14M1053.500 1040v14M1067.500 1040v14M1249.500 1040v14M1263.500 1040v14M1324.500 1040v14M1330.500 1040v14M1502.500 1040v14M1515.500 1040v14M963.500 1087v14M1515.500 1087v14"/>
						<path class="wall" d="M954 480.500h1M954 540.500h1M954 775.500h1M954 788.500h1M954 971.500h1M954 984.500h1M999 466.500h1"/>
						<g class="dimtext">
							<text x="970" y="1053">240</text><text x="1015" y="1053">1360</text><text x="1060" y="1053">240</text><text x="1158" y="1053">3258</text><text x="1256" y="1053">242</text><text x="1293" y="1053">1080</text><text x="1327" y="1053">120</text><text x="1416" y="1053">3060</text><text x="1509" y="1053">240</text><text x="1239" y="1099">9840</text>
							<g transform="rotate(-90)"><text x="-474" y="890">240</text><text x="-510" y="890">1060</text><text x="-547" y="890">240</text><text x="-665" y="890">3960</text><text x="-782" y="890">240</text><text x="-881" y="890">3260</text><text x="-979" y="890">240</text><text x="-726" y="845">9240</text></g>
						</g>
						<!-- watermark -->
						<g class="mark">
							<text transform="translate(1023 742) rotate(-45)" x="0 40 80 140 219 298" y="26">CAD自学网</text>
							<text class="url" transform="translate(1040 930) rotate(-45.500)" x="0 41 81 122 162 203 244 284 325 365 406 447 487 528" y="17">www.cadzxw.com</text>
						</g>
						<!-- crosshair and ucs -->
						<path class="wall" d="M42 454.500h2283M658.500 323v1007M647.500 443.500h23v23h-23z"/>
						<path class="wall" d="M66.500 1261v44M66 1305.500h45M62.500 1300.500h9v9h-9z"/>
						<path class="axis" d="M68 1245l5 6 5-6M73 1251v6M116 1293l11 12M127 1293l-11 12"/>
						<text class="frame" x="2308" y="1337">图框</text>
						<!-- view cube -->
						<circle cx="2252" cy="419" r="49" fill="none" stroke="#9aa0ab" stroke-opacity=".3" stroke-width="11"/>
						<rect x="2229" y="396" width="46" height="46" fill="#c4c6c9" fill-opacity=".85"/>
						<rect x="2238" y="404" width="28" height="29" fill="#9fa2a6" fill-opacity=".7"/>
						<g class="compass"><text x="2252" y="375">北</text><text x="2252" y="478">南</text><text x="2201" y="426">西</text><text x="2303" y="426">东</text><text class="top" x="2252" y="429">上</text></g>
					</svg>
					<div class="viewname">[−][自定义视图][二维线框]</div>
					<div class="subctl">
						<button aria-label="最小化"><svg width="10" height="10"><path d="M0 7h10" stroke="#fff" stroke-width="3"/></svg></button>
						<button aria-label="还原"><svg width="10" height="10"><path d="M1 4h6v5H1zM3 3V1h6v6H8" fill="none" stroke="#fff" stroke-width="1.500"/></svg></button>
						<button aria-label="关闭"><svg width="10" height="10"><path d="M1 1l8 8M9 1L1 9" stroke="#fff" stroke-width="2"/></svg></button>
					</div>
					<button class="wcs">WCS<svg width="10" height="6"><path d="M1 1h8L5 5z" fill="none" stroke="#bbb"/></svg></button>
					<div class="navbar">
						<button aria-label="控制盘"><svg width="22" height="22"><path d="M11 2h9v9a9 9 0 1 1-9-9z"/><circle cx="11" cy="11" r="5"/></svg><i class="tri tiny"></i></button>
						<button aria-label="平移"><svg width="22" height="22"><path d="M7 21L1 12l2-1 4 4L5 4h2l2 7V2h2l1 9 2-8h2v9l3-6 1 1-3 14z"/></svg></button>
						<button aria-label="缩放"><svg width="22" height="22"><path d="M1 1l12 12M13 1L1 13M1 5V1h4M9 1h4v4M1 9v4h4"/><circle cx="15" cy="15" r="4"/><path d="M18 18l4 4" stroke-width="2"/></svg><i class="tri tiny"></i></button>
						<button aria-label="动态观察"><svg width="22" height="22"><path d="M11 1l4 5h-2v15H9V6H7z"/><path d="M8 9q-7 1-7 4t10 4 10-4-7-4"/></svg><i class="tri tiny"></i></button>
						<button aria-label="ShowMotion"><svg width="22" height="22"><path d="M1 1h5v5H1zM8 1h5v5H8zM15 1h5v5h-5zM1 9h15v12H1z"/><path d="M6 11l6 4-6 4z" fill="#3e454e"/></svg></button>
					</div>
				</div>
				<div class="layouts">
					<div class="pager">
						<button aria-label="第一个"><svg width="14" height="16"><path d="M2 1v14" stroke="#444" stroke-width="2"/><path d="M12 1v14L4 8z"/></svg></button>
						<button aria-label="上一个"><svg width="14" height="16"><path d="M11 1v14L3 8z"/></svg></button>
						<button aria-label="下一个"><svg width="14" height="16"><path d="M3 1v14l8-7z"/></svg></button>
						<button aria-label="最后一个"><svg width="14" height="16"><path d="M2 1v14l8-7z"/><path d="M12 1v14" stroke="#444" stroke-width="2"/></svg></button>
					</div>
					<button class="model">模型</button>
					<button class="sheet">施工图</button>
					<svg class="slash" width="10" height="26"><path d="M1 26L9 0" stroke="#555"/></svg>
				</div>
				<div class="command">
					<div class="handle">
						<svg width="10" height="34" fill="#bbb"><path d="M1 1h3v3H1zM6 1h3v3H6zM1 8h3v3H1zM6 8h3v3H6zM1 15h3v3H1zM6 15h3v3H6zM1 22h3v3H1zM6 22h3v3H6zM1 29h3v3H1zM6 29h3v3H6z"/></svg>
						<div class="acts">
							<button aria-label="关闭"><svg width="18" height="18"><path d="M2 2l14 14M16 2L2 16" stroke="#ddd" stroke-width="3"/></svg></button>
							<button aria-label="自定义"><svg width="26" height="26"><path d="M2 4l5 4 4-1V2L8 0q8-1 8 7l9 12v6h-5L10 13Q2 14 0 7z" fill="#c4c4c4"/></svg></button>
						</div>
					</div>
					<label class="prompt">
						<svg width="27" height="27"><rect x="1" y="1" width="25" height="25" rx="2" fill="#a3a6ae" stroke="#848894" stroke-width="2"/><path d="M6 7l6 6-6 6M14 20h7" fill="none" stroke="#55585f" stroke-width="2"/></svg>
						<i class="tri gray"></i>
						<input type="text" placeholder="键入命令" aria-label="命令">
						<i class="tri up"></i>
					</label>
				</div>
			</div>
		</main>

		<footer class="status">
			<span class="coords">26199600, -5990061, 0</span>
			<div class="toggles">
				<button aria-label="推断约束"><svg width="16" height="16"><path d="M5 1v10M1 6h10M9 9h4v4H9z"/></svg></button>
				<button aria-label="捕捉"><svg width="16" height="16"><path d="M2 3h11M2 7h11M2 11h11" stroke-dasharray="2 2"/><path d="M14 2v12H2"/></svg></button>
				<button aria-label="栅格"><svg width="16" height="16"><path d="M1 2h14v12H1zM1 6h14M1 10h14M5 2v12M10 2v12"/></svg></button>
				<button class="on" aria-label="正交"><svg width="16" height="16"><path d="M2 1v13h13M2 9h5v5"/></svg></button>
				<button aria-label="极轴"><svg width="16" height="16"><path d="M8 14a5 5 0 1 1 4-6M8 9l5-6M8 9h6"/></svg></button>
				<button class="on" aria-label="对象捕捉"><svg width="16" height="16"><path d="M4 3h10v11H4z" fill="#fff"/><circle cx="4" cy="3" r="2" stroke="#d50"/></svg></button>
				<button class="on" aria-label="三维捕捉"><svg width="16" height="16"><path d="M3 5l3-3h8v8l-4 4H3z" fill="#fff"/><circle cx="3" cy="13" r="2" stroke="#d50"/></svg></button>
				<button class="on" aria-label="追踪"><svg width="16" height="16"><path d="M13 2L3 13h10"/></svg></button>
				<button aria-label="动态UCS"><svg width="16" height="16"><path d="M3 1v13h12M3 14l7-7"/><path d="M13 1l-4 6h4l-2 4" stroke="#e08a12"/></svg></button>
				<button aria-label="动态输入"><svg width="16" height="16"><path d="M5 3v8M1 7h8M10 8h4v4h-4z"/></svg></button>
				<button class="on" aria-label="线宽"><svg width="16" height="16"><path d="M8 2v12M2 8h12" stroke-width="2"/></svg></button>
				<button class="on" aria-label="透明度"><svg width="16" height="16"><path d="M2 1h12v14H2z" fill="#8dbde8" stroke="#3f78b8"/><path d="M4 4h9M4 8h9M4 12h9" stroke="#fff" stroke-dasharray="1 2"/></svg></button>
				<button aria-label="快捷特性"><svg width="16" height="16"><path d="M5 3h6v11H5z" stroke-width="2"/><path d="M7 6h2M7 9h2M7 11h2"/></svg></button>
				<button aria-label="选择循环"><svg width="16" height="16"><path d="M4 1v7M1 4h7"/><path d="M6 6h6v5H6zM9 9h6v6H9z" fill="#8fbf6c"/></svg></button>
				<button aria-label="注释监视器"><svg width="16" height="16"><path d="M6 1h4v5h5v4h-5v5H6v-5H1V6h5z" fill="#fff"/></svg></button>
			</div>
			<div class="tray">
				<button class="word">模型</button>
				<button aria-label="布局"><svg width="16" height="16"><path d="M3 2h10v9H3zM1 14h14M6 8V5l4 4" fill="#fff"/></svg></button>
				<button aria-label="快速查看"><svg width="18" height="16"><path d="M1 3h7v6H1zM10 3h7v6h-7z" fill="#fff"/><path d="M1 13h16" stroke-width="2"/></svg></button>
			</div>
			<div class="tray scale">
				<button class="word"><svg width="16" height="16"><path d="M8 1v7l6 5-6-2-6 2 6-5M5 11L8 1l3 10" fill="#fff"/></svg>1:1<i class="tri small"></i></button>
				<button aria-label="注释可见性"><svg width="16" height="16"><path d="M7 1v7l6 5-6-2-6 2 6-5M4 11L7 1l3 10" fill="#fff"/><circle cx="13" cy="8" r="2" fill="#f90" stroke="none"/></svg></button>
				<button aria-label="自动缩放"><svg width="16" height="16" opacity=".4"><path d="M8 1v7l6 5-6-2-6 2 6-5M5 11L8 1l3 10" fill="#fff"/></svg></button>
			</div>
			<div class="tray sys">
				<button aria-label="工作空间"><svg width="17" height="17"><use href="#gear"/></svg></button>
				<button aria-label="锁定"><svg width="16" height="16"><path d="M2 8h9v6H2z" fill="#fff"/><path d="M9 8V3q3-3 6 0v3" fill="none"/></svg></button>
				<button aria-label="硬件加速"><svg width="16" height="16"><circle cx="8" cy="8" r="6" fill="#f08030" stroke="#c65a12"/><path d="M5 5l3 4 3-2" stroke="#fff"/></svg></button>
			</div>
			<div class="notice"><svg width="16" height="16"><path d="M1 3h9l3 4v6H1z" fill="#4d84bd"/><path d="M2 8h8v5H2z" fill="#efd04c" stroke="none"/><path d="M7 11l3 3 5-6" fill="none" stroke="#2c8a2c" stroke-width="2"/></svg><svg width="16" height="16"><path d="M4 3q4-4 8 0 2 4-2 7v4H7v-4Q2 7 4 3z" fill="#fff0b0" stroke="#776"/></svg></div>
			<button class="drop" aria-label="状态栏菜单"><i class="tri small"></i></button>
			<button class="full" aria-label="全屏"><svg width="14" height="14"><path d="M1 2h12v11H1z" fill="#fff"/><path d="M1 3h12" stroke-width="2"/></svg></button>
		</footer>
	</div>
</body>
</html>
```
FILE: styles.css
```css
* {
	box-sizing: border-box;
}

body {
	margin: 0;
	padding: 8px;
	background: #fff;
	font: 21px/26px "Noto Sans", "Noto Sans CJK SC", sans-serif;
	color: #222;
}

button, select, input {
	margin: 0;
	padding: 0;
	border: 0;
	background: none;
	font: inherit;
	color: inherit;
	appearance: none;
	white-space: nowrap;
}

svg {
	display: block;
	flex: none;
}

p {
	margin: 0;
}

.defs {
	position: absolute;
	width: 0;
	height: 0;
}

.app {
	display: flex;
	flex-direction: column;
	height: calc(100vh - 16px);
	box-shadow: 0 0 6px 1px #777;
}

/* little triangles */
.tri {
	flex: none;
	width: 10px;
	height: 8px;
	background: #333;
	clip-path: polygon(0 0, 100% 0, 50% 100%);
}
.tri.large { width: 14px; }
.tri.small { width: 8px; height: 6px; }
.tri.tiny { width: 6px; height: 3px; }
.tri.dim { background: #444; }
.tri.gray { background: #666; }
.tri.white { background: #fff; }
.tri.up { width: 16px; height: 7px; clip-path: polygon(0 100%, 100% 100%, 50% 0); }

/* title bar */
.titlebar {
	display: flex;
	height: 43px;
	background: linear-gradient(#999, #5a5a5a);
}

.logo {
	align-self: flex-start;
	height: 43px;
	padding-bottom: 8px;
	background: linear-gradient(#ddd, #999 34px, #333 35px, #fff 37px);
	border-right: 1px solid #444;
}

.quick {
	display: flex;
	align-items: center;
	gap: 16px;
	padding: 0 10px 0 17px;
}

.quick button {
	display: flex;
	align-items: center;
	gap: 10px;
}

.workspace {
	display: flex;
	align-items: center;
	width: 323px;
	height: 37px;
	margin-top: 2px;
	padding: 0 3px 0 4px;
	gap: 3px;
	background: linear-gradient(#c9c9c9, #e9e9e9);
	border: 1px solid #888;
	color: #000;
}

.workspace select {
	flex: 1;
}

.banner {
	flex: 1;
	min-width: 0;
	background: #4b4b4b;
	color: #eee;
	font: bold 24px/35px "Liberation Mono", "Noto Sans CJK SC", monospace;
	white-space: nowrap;
	text-shadow: 0 0 2px #000;
}

.banner p {
	height: 35px;
	padding-left: 17px;
	overflow: hidden;
}

.banner b {
	font-size: 28px;
	font-weight: 500;
}

.strips {
	display: flex;
	gap: 27px;
	padding-left: 93px;
}

.strips i {
	flex: 382;
	height: 7px;
	background: #fff;
}

.strips i + i {
	flex: 324;
	height: 4px;
}

.account {
	display: flex;
	align-items: center;
	gap: 14px;
	padding: 0 8px 0 11px;
	color: #fff;
}

.account button {
	display: flex;
	align-items: center;
	gap: 10px;
}

.account .login {
	width: 202px;
}

.login .tri {
	margin-left: auto;
}

.sep {
	width: 1px;
	height: 36px;
	margin: 0 5px;
	background: #999;
}

.winctl {
	display: flex;
	align-items: center;
	justify-content: space-around;
	width: 292px;
	padding-left: 43px;
	background: #fff;
}

/* ribbon tabs */
.tabs {
	display: flex;
	align-items: flex-end;
	height: 36px;
	padding-left: 79px;
	background: #404040;
	border-top: 1px solid #333;
	color: #fff;
}

.tabs button {
	height: 32px;
	padding: 0 19px;
}

.tabs .active {
	background: linear-gradient(#d4d4d4, #f4f4f4);
	border-radius: 3px 3px 0 0;
	color: #111;
}

.tabs .mini {
	display: flex;
	align-items: center;
	gap: 9px;
	padding-left: 47px;
}

/* ribbon */
.ribbon {
	display: flex;
	height: 180px;
	padding: 1px 8px 2px 0;
	background: #fdfdfd;
	border-bottom: 1px solid #888;
}

.panel {
	display: flex;
	flex-direction: column;
	min-width: 0;
	border-right: 1px solid #909090;
}

.draw { flex: 383; }
.modify { flex: 411; }
.layer { flex: 388; }
.note { flex: 214; }
.block { flex: 178; }
.props { flex: 295; }
.group { flex: 123; }
.utils { flex: 180; }
.clip { flex: 137; }

.body {
	display: flex;
	height: 144px;
	padding: 9px 4px 0;
}

.caption {
	display: flex;
	align-items: center;
	justify-content: center;
	gap: 12px;
	height: 32px;
	margin: 0 2px;
	background: #eee;
	border-top: 2px solid #d8d8d8;
	border-bottom: 1px solid #ddd;
}

.caption button {
	display: flex;
	align-items: center;
	gap: 12px;
}

.props .caption {
	justify-content: space-between;
	padding: 0 8px;
}

.big {
	display: flex;
	flex: none;
	flex-direction: column;
	align-items: center;
	align-self: flex-start;
	width: 73px;
	padding-top: 4px;
}

.big svg {
	margin-bottom: 10px;
}

.big .tri {
	margin-top: 4px;
}

.stack {
	display: flex;
	flex-direction: column;
	gap: 4px;
}

.row {
	display: flex;
	justify-content: space-between;
}

.item {
	display: flex;
	align-items: center;
	gap: 9px;
	width: 107px;
	height: 40px;
}

.item .tri {
	margin-left: 10px;
}

.split {
	display: flex;
	width: 65px;
	height: 40px;
	background: linear-gradient(#fff, #f0f0f0);
	border: 2px solid #cacaca;
}

.split button {
	display: flex;
	align-items: center;
	justify-content: center;
	width: 40px;
}

.split button + button {
	flex: 1;
	border-left: 1px solid #cacaca;
}

.split.even {
	width: auto;
}

.split.even button {
	flex: none;
	width: 40px;
}

.tool {
	display: flex;
	align-items: center;
	justify-content: center;
	width: 43px;
	height: 40px;
	background: linear-gradient(#fff, #f0f0f0);
	border: 2px solid #cacaca;
}

.tool.on {
	background: linear-gradient(#8fc0f0, #b4d8fb);
	border-color: #3f78b8;
}

.draw .stack {
	margin-left: 8px;
}

.modify .body {
	padding-left: 12px;
}

.modify .wide {
	width: 128px;
}

.modify .wide .item {
	width: 120px;
}

.modify .wide .tri {
	margin-left: 13px;
}

.note .big {
	width: 86px;
}

.note .stack {
	margin-left: 8px;
}

.block .big {
	width: 71px;
}

.block .item {
	width: 98px;
	padding-left: 8px;
}

.group .big {
	width: 70px;
}

.group .big svg {
	margin-bottom: 6px;
}

.utils .body {
	justify-content: space-between;
	padding-left: 20px;
	padding-right: 5px;
}

.utils .big {
	width: 92px;
}

.clip .body {
	justify-content: space-between;
	padding-left: 10px;
}

.combo {
	display: flex;
	align-items: center;
	flex: 1;
	min-width: 0;
	height: 40px;
	padding: 0 5px 0 3px;
	background: linear-gradient(#fff, #eee);
	border: 2px solid #cacaca;
}

.combo select {
	flex: 1;
	min-width: 0;
}

.layer .combo {
	flex: none;
}

.layer .combo svg {
	margin-left: 3px;
}

.combo .cut {
	flex: none;
	width: 84px;
	margin: 0 auto 0 4px;
}

.swatch {
	width: 30px;
	height: 30px;
	margin-right: 4px;
	background: #fff;
	border: 2px solid #111;
}

.swatch.yellow {
	width: 26px;
	height: 26px;
	margin-right: 9px;
	background: #fff200;
}

.line {
	width: 117px;
	height: 2px;
	background: #222;
}

.line.short {
	width: 107px;
	margin-left: 10px;
}

.props .body {
	padding-left: 8px;
}

.prop {
	display: flex;
	align-items: center;
	gap: 4px;
}

/* document tabs */
.docs {
	display: flex;
	align-items: flex-end;
	height: 49px;
	padding: 0 26px 2px;
	background: linear-gradient(#a3a3a3, #939393);
}

.doctab {
	position: relative;
	display: flex;
	align-items: center;
	justify-content: space-between;
	width: 248px;
	height: 39px;
	padding: 0 35px 0 30px;
	color: #000;
}

.doctab .shape {
	position: absolute;
	inset: 0;
	width: 100%;
	height: 100%;
}

.doctab span, .doctab button {
	position: relative;
}

.adddoc {
	padding-bottom: 6px;
}

/* work area */
.work {
	display: flex;
	flex: 1;
	min-height: 0;
	padding-top: 7px;
	background: linear-gradient(#333 0, #333 2px, #6c7270 2px, #6c7270 5px, #9da3a1 5px, #9da3a1 7px, #444 7px);
}

.side {
	display: flex;
	align-items: center;
	justify-content: center;
	width: 34px;
	padding-right: 2px;
	background: linear-gradient(90deg, #6e6e6e, #878787 27px, #444 28px, #555 30px, #999 31px, #999 33px, #333);
	color: #fff;
}

.side span {
	writing-mode: vertical-rl;
	text-orientation: sideways;
	transform: rotate(180deg);
}

.view {
	position: relative;
	display: flex;
	flex: 1;
	flex-direction: column;
	min-width: 0;
}

.canvas {
	position: relative;
	flex: 1;
	min-height: 0;
	overflow: hidden;
	background: #212830;
}

.drawing {
	width: 100%;
	height: 100%;
}

.drawing path {
	fill: none;
	shape-rendering: crispEdges;
}

.wall { stroke: #e8e8e8; }
.wall.faint { stroke: #777c84; }
.drawing path.glass { stroke: #123c4a; stroke-width: 9; }
.drawing path.glassline { stroke: #3f929e; }
.drawing path.door { stroke: #043a10; stroke-width: 12; }
.drawing path.doorline { stroke: #3c9a48; }
.dim { stroke: #24b52c; }
.drawing path.axis { stroke: #ddd; shape-rendering: auto; }

.dimtext {
	fill: #1fe82a;
	font: 13px "Liberation Serif", serif;
	text-anchor: middle;
}

.mark {
	fill: #fff;
	fill-opacity: .09;
	font: 500 72px "Noto Sans CJK SC", sans-serif;
	text-anchor: middle;
}

.mark .url {
	font: bold 66px "Liberation Mono", monospace;
}

.compass {
	fill: #b5b8bc;
	font: 17px "Noto Sans CJK SC", sans-serif;
	text-anchor: middle;
}

.compass .top {
	fill: #444;
	font-size: 28px;
}

.frame {
	fill: #888;
	font-size: 16px;
}

.viewname {
	position: absolute;
	left: 3px;
	top: 4px;
	color: #eee;
	font-size: 11px;
	line-height: 16px;
}

.subctl {
	position: absolute;
	top: 8px;
	right: 8px;
	display: flex;
	gap: 8px;
}

.wcs {
	position: absolute;
	top: 175px;
	right: 52px;
	display: flex;
	align-items: center;
	gap: 4px;
	height: 16px;
	padding: 0 3px;
	background: #8f939c;
	border-radius: 4px;
	color: #444;
	font: 10px/16px "Liberation Sans", sans-serif;
}

.navbar {
	position: absolute;
	top: 214px;
	right: 1px;
	display: flex;
	flex-direction: column;
	align-items: center;
	gap: 6px;
	width: 30px;
	height: 192px;
	padding-top: 16px;
	background: #5a6069;
	border: 1px solid #767b83;
	border-radius: 3px;
}

.navbar button {
	display: flex;
	flex-direction: column;
	align-items: center;
	gap: 5px;
}

.navbar svg {
	fill: none;
	stroke: #3e454e;
}

/* layout tabs */
.layouts {
	display: flex;
	height: 29px;
	background: #eee;
	border-top: 1px solid #999;
	border-bottom: 3px solid #fafafa;
}

.pager {
	display: flex;
}

.pager button {
	display: flex;
	align-items: center;
	justify-content: center;
	width: 26px;
	background: #f0f0f0;
	border-right: 1px solid #999;
	fill: #444;
}

.model {
	width: 86px;
	background: #212830;
	color: #fff;
	clip-path: polygon(0 0, 100% 0, 90% 100%, 10% 100%);
}

.sheet {
	padding: 0 10px 0 8px;
	color: #000;
}

/* command line floats over the drawing */
.command {
	position: absolute;
	left: 20%;
	right: 20%;
	bottom: 17px;
	display: flex;
	align-items: center;
}

.handle {
	display: flex;
	align-items: center;
	gap: 9px;
	height: 48px;
	padding: 0 7px;
	background: linear-gradient(#555, #777);
	border: 1px solid #888;
	border-radius: 4px 0 0 4px;
}

.acts {
	display: flex;
	align-items: center;
	gap: 18px;
}

.prompt {
	display: flex;
	align-items: center;
	flex: 1;
	gap: 7px;
	height: 51px;
	padding: 0 7px;
	background: rgba(255, 255, 255, .72);
	border: 2px solid rgba(130, 130, 135, .8);
	border-radius: 4px;
}

.prompt input {
	flex: 1;
	min-width: 0;
	height: 46px;
	padding-left: 10px;
	font-size: 36px;
	font-style: italic;
}

.prompt input::placeholder {
	color: #75777a;
}

/* status bar */
.status {
	display: flex;
	align-items: flex-start;
	height: 28px;
	background: linear-gradient(#9a9a9a, #777);
	border-top: 1px solid #111;
	border-bottom: 2px solid #222;
}

.status svg {
	fill: none;
	stroke: #333;
}

.coords {
	width: 306px;
	padding-left: 9px;
	color: #aaa;
	font: 18px/18px "Liberation Mono", monospace;
}

.toggles {
	display: flex;
	flex: 1;
}

.toggles button, .tray button {
	display: flex;
	align-items: center;
	justify-content: center;
	width: 20px;
	height: 20px;
	background: #b4b4b4;
	border-right: 1px solid #888;
}

.toggles .on {
	background: #b5dcf2;
}

.tray {
	display: flex;
	margin-right: 25px;
}

.tray .word {
	width: auto;
	gap: 4px;
	padding: 0 2px;
}

.scale {
	margin-right: 4px;
}

.scale .word {
	font-family: "Liberation Serif", serif;
	font-size: 24px;
}

.sys {
	margin-right: 1px;
}

.notice {
	display: flex;
	align-items: center;
	gap: 3px;
	height: 23px;
	padding: 0 2px;
	background: #aaa;
	border: 1px solid #666;
}

.drop {
	display: flex;
	align-items: center;
	justify-content: center;
	width: 17px;
	height: 20px;
}

.full {
	width: 17px;
	height: 20px;
	background: #b4b4b4;
}
```
